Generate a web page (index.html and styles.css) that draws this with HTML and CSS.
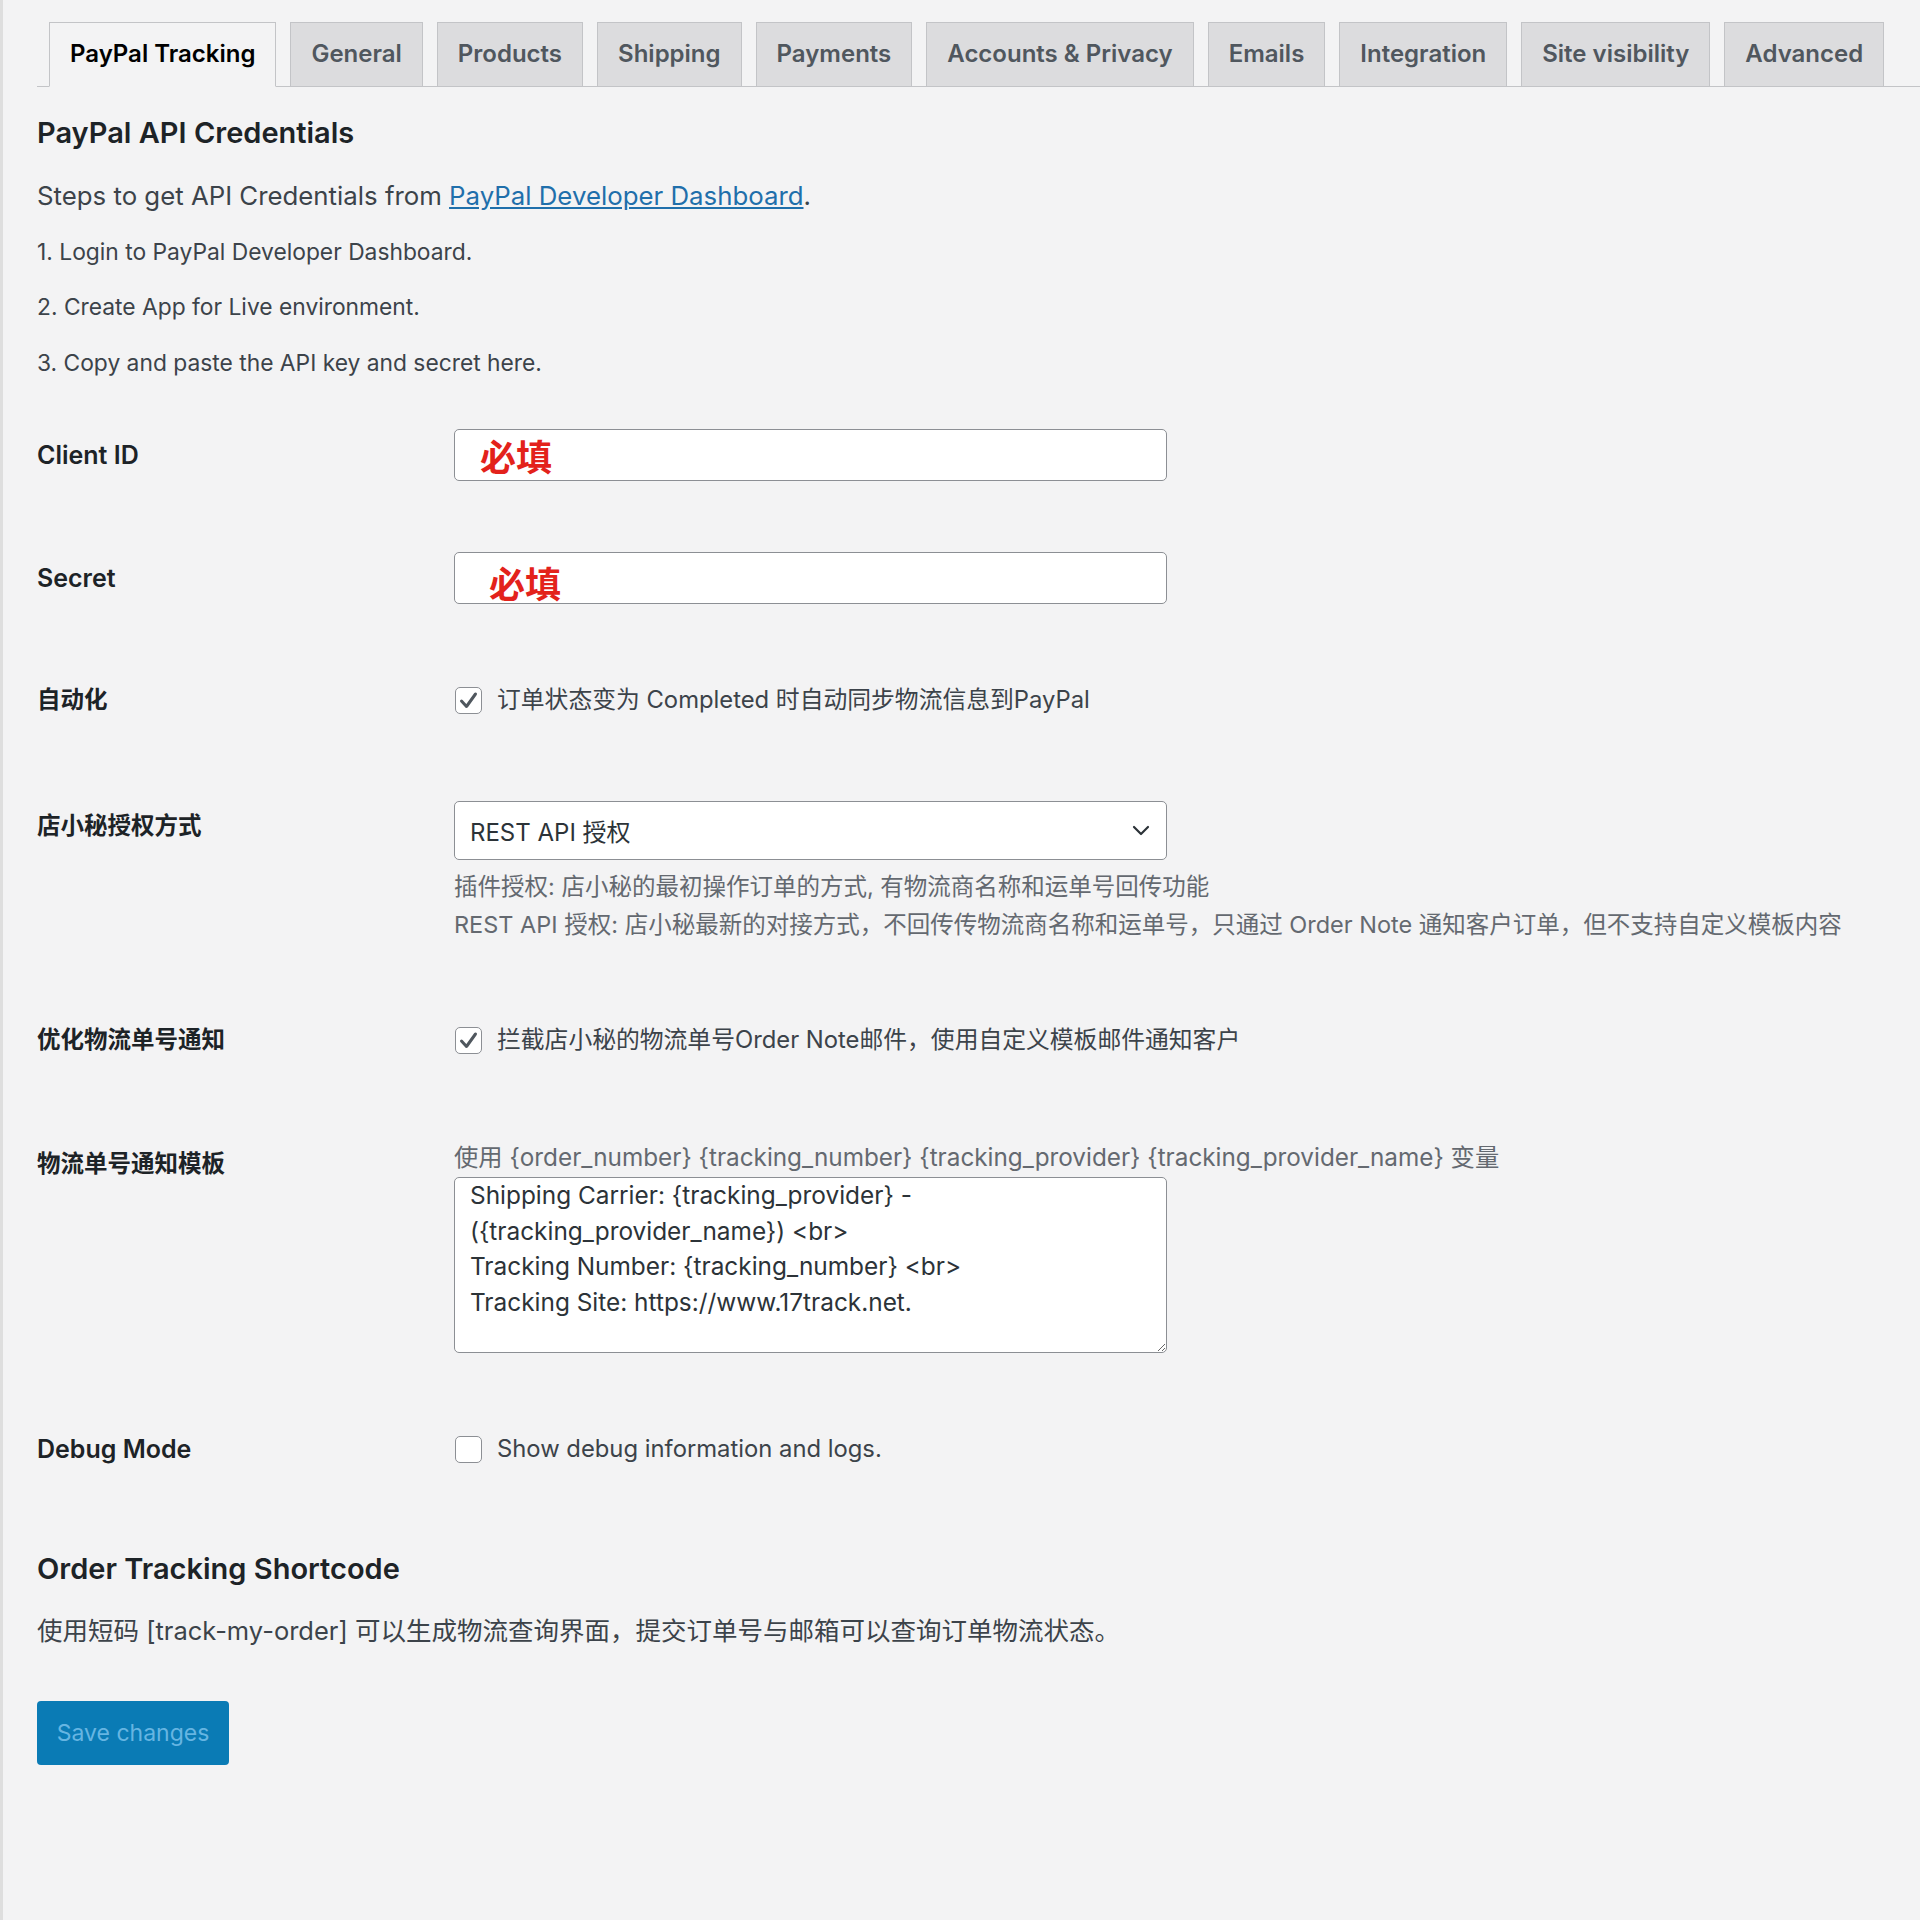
FILE: index.html
```html
<!DOCTYPE html>
<html lang="zh-CN">
<head>
  <meta charset="UTF-8">
  <title>PayPal Tracking</title>
  <link rel="stylesheet" href="styles.css">
</head>
<body>
<div class="wrap">
  <nav class="tabs">
    <a href="#" class="tab tab-active">PayPal Tracking</a>
    <a href="#" class="tab">General</a>
    <a href="#" class="tab">Products</a>
    <a href="#" class="tab">Shipping</a>
    <a href="#" class="tab">Payments</a>
    <a href="#" class="tab">Accounts &amp; Privacy</a>
    <a href="#" class="tab">Emails</a>
    <a href="#" class="tab">Integration</a>
    <a href="#" class="tab">Site visibility</a>
    <a href="#" class="tab">Advanced</a>
  </nav>

  <h2 class="section-title">PayPal API Credentials</h2>
  <div class="steps">
    <p class="steps-intro">Steps to get API Credentials from <a href="#">PayPal Developer Dashboard</a>.</p>
    <p>1. Login to PayPal Developer Dashboard.</p>
    <p>2. Create App for Live environment.</p>
    <p>3. Copy and paste the API key and secret here.</p>
  </div>

  <div class="form-table">
    <div class="form-row">
      <label class="row-label">Client ID</label>
      <div class="row-field"><input type="text" class="text-input" value="必填"></div>
    </div>

    <div class="form-row">
      <label class="row-label">Secret</label>
      <div class="row-field"><input type="text" class="text-input text-input-shifted" value="必填"></div>
    </div>

    <div class="form-row form-row-check">
      <label class="row-label row-label-cjk">自动化</label>
      <div class="row-field check-field">
        <span class="check">
          <svg width="21" height="19" viewBox="0 0 21 19"><path d="M3.5 10 L8.5 15.5 L17.5 3" fill="none" stroke="#50575e" stroke-width="3" stroke-linecap="round" stroke-linejoin="round"/></svg>
        </span>
        <span>订单状态变为 Completed 时自动同步物流信息到PayPal</span>
      </div>
    </div>

    <div class="form-row form-row-select">
      <label class="row-label row-label-cjk">店小秘授权方式</label>
      <div class="row-field">
        <div class="select-box">
          <span>REST API 授权</span>
          <svg width="18" height="11" viewBox="0 0 18 11"><path d="M2 2 L9 9 L16 2" fill="none" stroke="#2c3338" stroke-width="2.2" stroke-linecap="round" stroke-linejoin="round"/></svg>
        </div>
        <div class="field-desc">
          <p>插件授权: 店小秘的最初操作订单的方式, 有物流商名称和运单号回传功能</p>
          <p>REST API 授权: 店小秘最新的对接方式，不回传传物流商名称和运单号，只通过 Order Note 通知客户订单，但不支持自定义模板内容</p>
        </div>
      </div>
    </div>

    <div class="form-row form-row-check">
      <label class="row-label row-label-cjk">优化物流单号通知</label>
      <div class="row-field check-field">
        <span class="check">
          <svg width="21" height="19" viewBox="0 0 21 19"><path d="M3.5 10 L8.5 15.5 L17.5 3" fill="none" stroke="#50575e" stroke-width="3" stroke-linecap="round" stroke-linejoin="round"/></svg>
        </span>
        <span>拦截店小秘的物流单号Order Note邮件，使用自定义模板邮件通知客户</span>
      </div>
    </div>

    <div class="form-row form-row-template">
      <label class="row-label row-label-cjk">物流单号通知模板</label>
      <div class="row-field">
        <p class="template-hint">使用 {order_number} {tracking_number} {tracking_provider} {tracking_provider_name} 变量</p>
        <textarea class="template-text">Shipping Carrier: {tracking_provider} -
({tracking_provider_name}) &lt;br&gt;
Tracking Number: {tracking_number} &lt;br&gt;
Tracking Site: https://www.17track.net.</textarea>
      </div>
    </div>

    <div class="form-row form-row-check">
      <label class="row-label">Debug Mode</label>
      <div class="row-field check-field">
        <span class="check"></span>
        <span>Show debug information and logs.</span>
      </div>
    </div>
  </div>

  <h2 class="section-title section-title-second">Order Tracking Shortcode</h2>
  <p class="shortcode-note">使用短码 [track-my-order] 可以生成物流查询界面，提交订单号与邮箱可以查询订单物流状态。</p>

  <button type="button" class="save-btn">Save changes</button>
</div>
</body>
</html>
```

FILE: styles.css
```css
* {
  box-sizing: border-box;
}
body {
  margin: 0;
  min-height: 1920px;
  background: #f3f3f4;
  border-left: 3px solid #dedede;
  font-family: Inter, "Noto Sans CJK SC", sans-serif;
  color: #3c434a;
}
p {
  margin: 0;
}
.wrap {
  padding: 22px 0 0 34px;
}

/* tabs */
.tabs {
  display: flex;
  align-items: flex-end;
  gap: 14px;
  padding-left: 12px;
  border-bottom: 1px solid #c3c4c7;
}
.tab {
  display: block;
  height: 64px;
  line-height: 62px;
  padding: 0 20px;
  border: 1px solid #c3c4c7;
  border-bottom: none;
  background: #dcdcde;
  color: #50575e;
  font-size: 24px;
  font-weight: 600;
  text-decoration: none;
  white-space: nowrap;
}
.tab-active {
  height: 65px;
  margin-bottom: -1px;
  border-bottom: 1px solid #f3f3f4;
  background: #f3f3f4;
  color: #000;
}

/* headings and text */
.section-title {
  margin: 27px 0 0;
  font-size: 29px;
  line-height: 38px;
  font-weight: 600;
  color: #1d2327;
}
.section-title-second {
  margin-top: 76px;
}
.steps {
  display: flex;
  flex-direction: column;
  gap: 20.5px;
  margin-top: 26px;
  font-size: 22.8px;
  line-height: 35px;
}
.steps .steps-intro {
  font-size: 25.8px;
}
.steps a {
  color: #1f6fab;
  text-decoration: underline;
}

/* form */
.form-table {
  display: flex;
  flex-direction: column;
  gap: 71px;
  margin-top: 49.5px;
}
.form-row {
  display: grid;
  grid-template-columns: 417px 1fr;
  align-items: start;
}
.row-label {
  padding-top: 8px;
  font-size: 25px;
  line-height: 36px;
  font-weight: 600;
  color: #1d2327;
}
.row-label-cjk {
  font-size: 23.5px;
}
.form-row-check {
  align-items: center;
  min-height: 50px;
}
.form-row-check .row-label {
  padding-top: 0;
}
.form-row-select .row-label {
  padding-top: 12px;
}
.form-row-template .row-label {
  padding-top: 10px;
}

.text-input {
  display: block;
  width: 713px;
  height: 52px;
  padding: 0 0 0 25px;
  border: 1px solid #8c8f94;
  border-radius: 5px;
  background: #fff;
  font-family: "Noto Sans CJK SC", sans-serif;
  font-size: 36px;
  font-weight: 700;
  color: #e3221b;
}
.text-input-shifted {
  padding: 8px 0 0 34px;
}

.check-field {
  display: flex;
  align-items: center;
  gap: 15px;
  font-size: 23.8px;
  line-height: 36px;
  color: #3c434a;
}
.check {
  display: flex;
  align-items: center;
  justify-content: center;
  flex-shrink: 0;
  width: 27px;
  height: 27px;
  margin-left: 1px;
  border: 1px solid #8c8f94;
  border-radius: 5px;
  background: #fff;
}

.select-box {
  display: flex;
  align-items: center;
  justify-content: space-between;
  width: 713px;
  height: 59px;
  margin-top: 5px;
  padding: 0 16px 0 15px;
  border: 1px solid #8c8f94;
  border-radius: 5px;
  background: #fff;
  font-size: 24px;
  color: #2c3338;
}
.field-desc {
  margin-top: 8px;
  font-size: 23.5px;
  line-height: 38px;
  color: #646970;
}

.template-hint {
  padding-top: 4px;
  font-size: 24.3px;
  line-height: 34px;
  color: #646970;
}
.template-text {
  display: block;
  width: 713px;
  height: 176px;
  margin-top: 3px;
  padding: 0 15px;
  border: 1px solid #8c8f94;
  border-radius: 5px;
  background: #fff;
  font-family: Inter, sans-serif;
  font-size: 24.4px;
  line-height: 35.5px;
  color: #2c3338;
  resize: vertical;
}

.shortcode-note {
  margin-top: 25px;
  font-size: 25.5px;
  line-height: 36px;
  color: #3c434a;
}

.save-btn {
  display: block;
  width: 192px;
  height: 64px;
  margin-top: 52px;
  border: none;
  border-radius: 4px;
  background: #0a7bb5;
  color: #66b5e2;
  font-family: Inter, sans-serif;
  font-size: 23px;
}
```
